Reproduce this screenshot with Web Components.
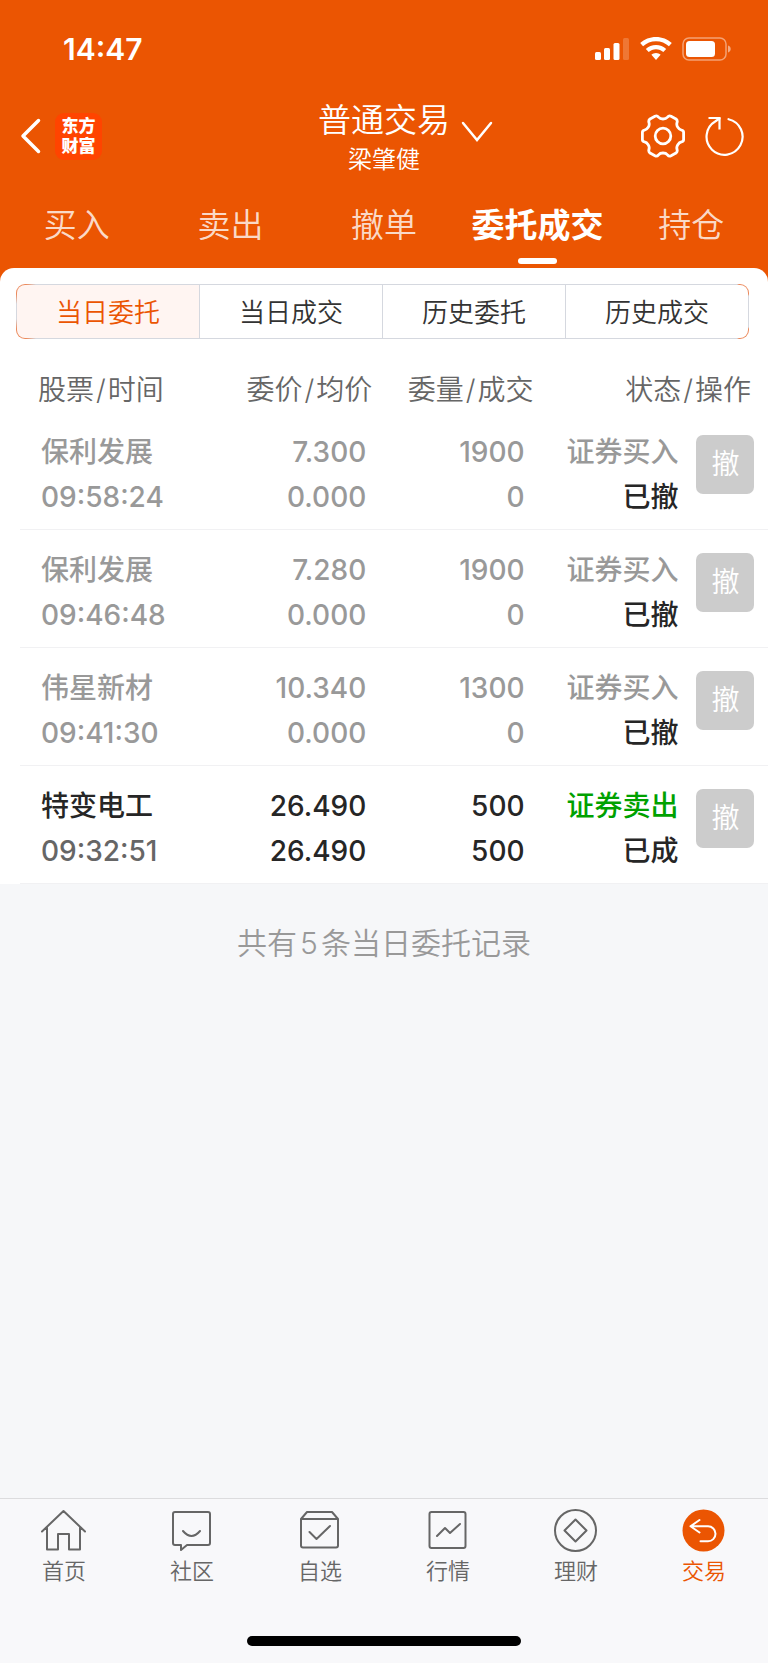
<!DOCTYPE html>
<html lang="zh-CN">
<head>
<meta charset="utf-8">
<meta name="viewport" content="width=device-width, initial-scale=1">
<title>委托成交</title>
<style>
    body {
        margin: 0;
        font-family: Inter, "Noto Sans CJK SC", sans-serif;
        --brand: #eb5502;
        --ink: #262626;
    }

    .count { margin: 0 3px; }
</style>
</head>
<body>
<trade-app>
    <status-bar slot="top">14:47</status-bar>
    <title-bar slot="top">
        普通交易
        <span slot="account">梁肇健</span>
    </title-bar>
    <trade-tabs slot="top" items="买入,卖出,撤单,委托成交,持仓" active="3"></trade-tabs>
    <segment-control items="当日委托,当日成交,历史委托,历史成交" active="0"></segment-control>
    <order-table></order-table>
    <span slot="summary">共有<span class="count">5</span>条当日委托记录</span>
    <bottom-nav slot="bottom" active="5"></bottom-nav>
</trade-app>

<script>
const define = (name, html, setup) => {
    const template = document.createElement('template')
    template.innerHTML = html

    customElements.define(name, class extends HTMLElement {
        constructor() {
            super()
            this.attachShadow({ mode: 'open' })
            this.shadowRoot.appendChild(template.content.cloneNode(true))
        }

        connectedCallback() {
            if (setup) {
                setup(this, this.shadowRoot)
            }
        }
    })
}

// page frame: orange head, white panel, grey rest, bottom navigation
define('trade-app', `
    <style>
        :host {
            display: flex;
            flex-direction: column;
            min-height: 100vh;
            background: #f6f7f9;
        }

        header {
            background: var(--brand);
            color: #fff;
        }

        main {
            flex: 1;
            background: linear-gradient(var(--brand) 20px, transparent 20px);
        }

        .panel {
            padding-top: 16px;
            background: #fff;
            border-radius: 14px 14px 0 0;
        }

        .summary {
            margin: 0;
            padding: 39px 0;
            font-size: 30px;
            font-weight: 350;
            line-height: 40px;
            text-align: center;
            color: #999;
        }
    </style>
    <header><slot name="top"></slot></header>
    <main>
        <div class="panel"><slot></slot></div>
        <p class="summary"><slot name="summary"></slot></p>
    </main>
    <slot name="bottom"></slot>
`)

define('status-bar', `
    <style>
        :host {
            display: flex;
            align-items: center;
            justify-content: space-between;
            height: 92px;
            padding: 6px 36px 0 63px;
            box-sizing: border-box;
            font-size: 30px;
            font-weight: 600;
        }

        .icons {
            display: flex;
            align-items: center;
            gap: 10px;
        }
    </style>
    <time><slot></slot></time>
    <div class="icons">
        <svg width="35" height="24" viewBox="0 0 35 24" fill="#fff">
            <rect x="0" y="15" width="6" height="8" rx="1.5"/>
            <rect x="9" y="11" width="6" height="12" rx="1.5"/>
            <rect x="18.500" y="6" width="6" height="17" rx="1.5"/>
            <rect x="28" y="1" width="6" height="22" rx="1.500" opacity=".2"/>
        </svg>
        <svg width="32" height="24" viewBox="0 0 32 24" fill="#fff">
            <path d="M16 0C9.900 0 4.300 2.300.2 6.100l2.900 3.100c3.400-3.100 7.900-5 12.900-5s9.500 1.900 12.900 5l2.900-3.100C27.700 2.300 22.100 0 16 0z"/>
            <path d="M16 8c-3.900 0-7.500 1.500-10.200 4l2.900 3.100c1.900-1.800 4.500-2.900 7.300-2.900s5.400 1.100 7.300 2.900l2.900-3.100C23.500 9.500 19.900 8 16 8z"/>
            <path d="M16 16c-1.800 0-3.400.7-4.600 1.800L16 23l4.600-5.200C19.400 16.700 17.800 16 16 16z"/>
        </svg>
        <svg width="50" height="24" viewBox="0 0 50 24">
            <rect x="1" y="1" width="43" height="22" rx="6" fill="none" stroke="#fff" stroke-width="1.500" opacity=".45"/>
            <rect x="4" y="4" width="29" height="16" rx="3.500" fill="#fff"/>
            <path d="M46 8.500c1.700.6 2.700 1.900 2.700 3.500s-1 2.900-2.700 3.500z" fill="#fff" opacity=".5"/>
        </svg>
    </div>
`)

define('title-bar', `
    <style>
        :host {
            display: grid;
            grid-template-columns: 1fr auto 1fr;
            align-items: center;
            height: 88px;
        }

        button, a {
            display: block;
            padding: 0;
            border: 0;
            background: none;
            color: inherit;
            font: inherit;
        }

        svg {
            display: block;
            fill: none;
            stroke: #fff;
        }

        .left {
            display: flex;
            align-items: center;
            gap: 14px;
            padding-left: 20px;
        }

        .logo {
            width: 47px;
            height: 47px;
            padding: 3px 0 4px;
            box-sizing: border-box;
            border-radius: 9px;
            background: #ff4400;
            font-size: 17px;
            font-weight: 900;
            line-height: 20px;
            text-align: center;
            text-decoration: none;
        }

        .names { padding-top: 6px; }

        h1 {
            margin: 0;
            font-size: 33px;
            font-weight: 350;
            line-height: 42px;
        }

        .account {
            font-size: 24px;
            font-weight: 350;
            line-height: 38px;
            text-align: center;
        }

        .right {
            display: flex;
            align-items: center;
            justify-content: flex-end;
            gap: 20px;
            padding-right: 23px;
        }

        .more {
            margin-right: auto;
            padding: 0 0 8px 11px;
        }
    </style>
    <div class="left">
        <button aria-label="返回">
            <svg width="21" height="36" viewBox="0 0 21 36" stroke-width="3.500" stroke-linecap="round" stroke-linejoin="round"><path d="M18.500 2.500 3 18l15.500 15.500"/></svg>
        </button>
        <a class="logo" href="#">东方<br>财富</a>
    </div>
    <div class="names">
        <h1><slot></slot></h1>
        <div class="account"><slot name="account"></slot></div>
    </div>
    <div class="right">
        <button class="more" aria-label="切换账户">
            <svg width="32" height="22" viewBox="0 0 32 22" stroke-width="2.500" stroke-linecap="round"><path d="m2 2 14 17L30 2"/></svg>
        </button>
        <button aria-label="设置">
            <svg width="44" height="44" viewBox="0 0 44 44" stroke-width="2.800" stroke-linejoin="round">
                <path d="M14 2.200Q16 1.200 17.500 3.200Q19 5 22 5T26.500 3.200Q28 1.200 30 2.200L35 5Q36.800 6.300 36 8.700Q35.300 11 36.800 13.300Q38.300 15.700 40.500 16.100Q42.600 16.500 42.600 18.500V25.500Q42.600 27.500 40.500 27.900Q38.300 28.300 36.800 30.700Q35.300 33 36 35.300Q36.800 37.700 35 39L30 41.800Q28 42.800 26.500 40.800Q25 39 22 39T17.500 40.800Q16 42.800 14 41.800L9 39Q7.200 37.700 8 35.300Q8.700 33 7.200 30.700Q5.700 28.300 3.500 27.900Q1.400 27.500 1.400 25.500V18.500Q1.400 16.500 3.500 16.100Q5.700 15.700 7.200 13.300Q8.700 11 8 8.700Q7.200 6.300 9 5Z"/>
                <circle cx="22" cy="22" r="7.800"/>
            </svg>
        </button>
        <button aria-label="刷新">
            <svg width="40" height="40" viewBox="0 0 40 40" stroke-width="2.200" stroke-linecap="round">
                <path d="M23.500 3.200A18 18 0 1 1 10.500 5.200L14.500 2.500"/>
                <path d="M3.500 2H14.500V13.500" stroke-linecap="butt"/>
            </svg>
        </button>
    </div>
`)

const fillButtons = (host, root) => {
    const box = root.querySelector('nav')
    const active = Number(host.getAttribute('active'))
    host.getAttribute('items').split(',').forEach((text, i) => {
        const button = document.createElement('button')
        button.textContent = text
        if (i === active) {
            button.className = 'on'
        }
        box.appendChild(button)
    })
}

define('trade-tabs', `
    <style>
        :host { display: block; }

        nav {
            display: grid;
            grid-auto-flow: column;
            grid-auto-columns: 1fr;
            height: 88px;
        }

        button {
            position: relative;
            padding: 0 0 3px;
            border: 0;
            background: none;
            color: rgba(255, 255, 255, .8);
            font: inherit;
            font-size: 33px;
            font-weight: 350;
            white-space: nowrap;
        }

        .on {
            color: #fff;
            font-weight: 600;
        }

        .on::after {
            content: '';
            position: absolute;
            bottom: 4px;
            left: calc(50% - 20px);
            width: 39px;
            height: 6px;
            border-radius: 3px;
            background: #fff;
        }
    </style>
    <nav></nav>
`, fillButtons)

define('segment-control', `
    <style>
        /* the host shows through a 1px rim: grey, orange at the corners */
        :host {
            display: block;
            margin: 0 19px 0 16px;
            padding: 1px;
            border-radius: 9px;
            background:
                radial-gradient(circle at 0 0, #ec8a5c 10px, transparent 20px),
                radial-gradient(circle at 0 100%, #ec8a5c 10px, transparent 20px),
                radial-gradient(circle at 100% 0, #ec8a5c 10px, transparent 12px),
                radial-gradient(circle at 100% 100%, #ec8a5c 10px, transparent 12px),
                #d5d8df;
        }

        nav {
            display: grid;
            grid-auto-flow: column;
            grid-auto-columns: 1fr;
            gap: 1px;
            height: 53px;
            border-radius: 8px;
            overflow: hidden;
        }

        button {
            padding: 0 0 2px;
            border: 0;
            background: #fff;
            color: #333;
            font: inherit;
            font-size: 26px;
            font-weight: 350;
        }

        .on {
            background: #fff5f2;
            color: var(--brand);
        }
    </style>
    <nav></nav>
`, fillButtons)

const orders = [
    { name: '保利发展', time: '09:58:24', price: '7.300', avg: '0.000', qty: '1900', done: '0', side: '证券买入', state: '已撤', type: 'void' },
    { name: '保利发展', time: '09:46:48', price: '7.280', avg: '0.000', qty: '1900', done: '0', side: '证券买入', state: '已撤', type: 'void' },
    { name: '伟星新材', time: '09:41:30', price: '10.340', avg: '0.000', qty: '1300', done: '0', side: '证券买入', state: '已撤', type: 'void' },
    { name: '特变电工', time: '09:32:51', price: '26.490', avg: '26.490', qty: '500', done: '500', side: '证券卖出', state: '已成', type: 'sell' }
]

define('order-table', `
    <style>
        :host { display: block; }

        table {
            width: 100%;
            table-layout: fixed;
            border-collapse: collapse;
        }

        .c1 { width: 28%; }
        .c2, .c3 { width: 21%; }
        .c4 { width: 19%; }

        th, td {
            padding: 0;
            text-align: right;
            white-space: nowrap;
        }

        th {
            height: 40px;
            padding: 31px 4px 2px 0;
            color: #666;
            font-size: 28px;
            font-weight: 350;
            line-height: 40px;
        }

        th span { margin: 0 2px; }

        th:first-child {
            padding-left: 38px;
            text-align: left;
        }

        th:last-child { padding-right: 17px; }

        tbody tr {
            background: linear-gradient(#f1f1f3, #f1f1f3) 20px 100% / 100% 1px no-repeat;
        }

        td {
            padding: 18px 10px 10px 0;
            color: var(--ink);
            font-size: 28px;
            font-weight: 500;
            line-height: 45px;
            vertical-align: top;
        }

        td:first-child {
            padding-left: 41px;
            text-align: left;
        }

        td:nth-child(3) { padding-right: 13px; }

        td:nth-child(4) { padding-right: 5px; }

        td:last-child {
            padding: 23px 0 0 13px;
            text-align: left;
        }

        td div { height: 45px; }

        .void td { color: #999; }
        .void .state { color: var(--ink); }
        .sell .side { color: #00a100; }
        .sell .time { color: #666; }

        button {
            display: block;
            width: 58px;
            height: 59px;
            padding: 0;
            border: 0;
            border-radius: 7px;
            background: #ccc;
            color: #fff;
            font: inherit;
            font-size: 28px;
            font-weight: 350;
        }
    </style>
    <table>
        <colgroup><col class="c1"><col class="c2"><col class="c3"><col class="c4"><col></colgroup>
        <thead>
            <tr>
                <th scope="col">股票<span>/</span>时间</th>
                <th scope="col">委价<span>/</span>均价</th>
                <th scope="col">委量<span>/</span>成交</th>
                <th scope="col" colspan="2">状态<span>/</span>操作</th>
            </tr>
        </thead>
        <tbody></tbody>
    </table>
`, (host, root) => {
    root.querySelector('tbody').innerHTML = orders.map(o => `
        <tr class="${o.type}">
            <td><div>${o.name}</div><div class="time">${o.time}</div></td>
            <td><div>${o.price}</div><div>${o.avg}</div></td>
            <td><div>${o.qty}</div><div>${o.done}</div></td>
            <td><div class="side">${o.side}</div><div class="state">${o.state}</div></td>
            <td><button>撤</button></td>
        </tr>`).join('')
})

const pages = [
    ['首页', '<path d="M1 22.500 22.500 2 44 22.500M6 18.500V40.500H17V25H28V40.500H39V18.500"/>'],
    ['社区', '<path d="M6 3H39Q41 3 41 5V34Q41 36 39 36H18L12 41V36H6Q4 36 4 34V5Q4 3 6 3ZM14 22Q22.500 32 31 22"/>'],
    ['自选', '<path d="M4 10 10 3H35L41 10V36.500Q41 38.500 39 38.500H6Q4 38.500 4 36.500ZM4 10H41M12.500 23 19.500 30 33 17"/>'],
    ['行情', '<rect x="4.500" y="3" width="36" height="36" rx="2"/><path d="m12 27 8-8 5 5 10-9"/>'],
    ['理财', '<circle cx="22.500" cy="21.500" r="20.500"/><path d="M22.500 10.500 33.500 21.500 22.500 32.500 11.500 21.500Z"/>'],
    ['交易', '<circle cx="22.500" cy="21.500" r="21" fill="#eb5502" stroke="none"/><path d="M18.500 11 9.500 17.300 18.500 23.500M9.500 17.300H27A7.500 7.500 0 0 1 27 32.300H19.500" stroke="#fff"/>']
]

define('bottom-nav', `
    <style>
        :host {
            display: block;
            padding-bottom: 17px;
            border-top: 1px solid #dcdcde;
            background: #f8f8fa;
        }

        nav {
            display: grid;
            grid-template-columns: repeat(6, 1fr);
            height: 137px;
        }

        a {
            display: flex;
            flex-direction: column;
            align-items: center;
            gap: 3px;
            padding-top: 10px;
            color: #666;
            font-size: 22px;
            font-weight: 350;
            line-height: 32px;
            text-decoration: none;
        }

        .on { color: var(--brand); }

        svg {
            display: block;
            fill: none;
            stroke: #666;
            stroke-width: 2;
            stroke-linecap: round;
            stroke-linejoin: round;
        }

        .home-bar {
            width: 274px;
            height: 10px;
            margin: 0 auto;
            border-radius: 5px;
            background: #000;
        }
    </style>
    <nav></nav>
    <div class="home-bar"></div>
`, (host, root) => {
    const active = Number(host.getAttribute('active'))
    root.querySelector('nav').innerHTML = pages.map(([label, icon], i) => `
        <a href="#" class="${i === active ? 'on' : ''}">
            <svg width="46" height="43" viewBox="0 0 46 43">${icon}</svg>
            ${label}
        </a>`).join('')
})
</script>
</body>
</html>
